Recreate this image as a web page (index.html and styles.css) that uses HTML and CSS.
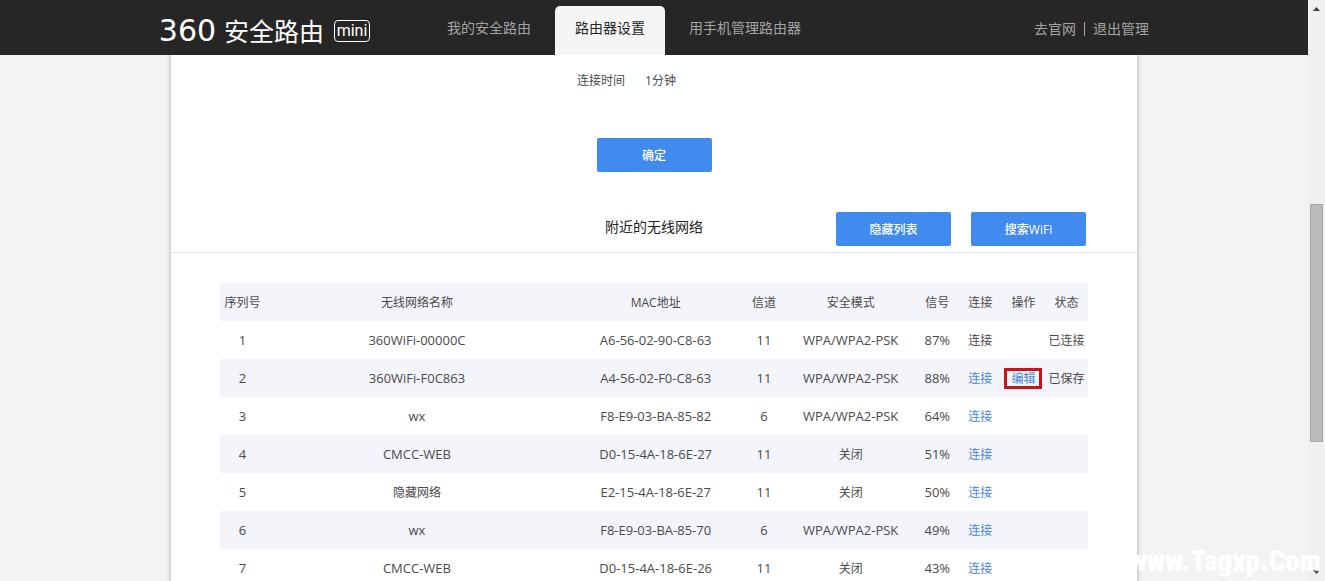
FILE: index.html
```
<!DOCTYPE html>
<html lang="zh-CN">
<head>
	<meta charset="utf-8">
	<title>360安全路由</title>
	<link rel="stylesheet" href="styles.css">
</head>
<body>

<div class="page">
	<header class="header">
		<div class="header-inner">
			<a class="logo" href="#"><span class="logo-num">360</span><span class="logo-name">安全路由</span><span class="logo-mini">mini</span></a>
			<nav class="nav">
				<a href="#">我的安全路由</a>
				<a href="#" class="active">路由器设置</a>
				<a href="#">用手机管理路由器</a>
			</nav>
			<div class="user-links">
				<a href="#">去官网</a>
				<a href="#">退出管理</a>
			</div>
		</div>
	</header>

	<main class="content">
		<div class="info-row">
			<span class="info-label">连接时间</span>
			<span>1分钟</span>
		</div>
		<div class="submit-row">
			<button class="button" type="button">确定</button>
		</div>

		<div class="section-head">
			<h2>附近的无线网络</h2>
			<div class="section-buttons">
				<button class="button" type="button">隐藏列表</button>
				<button class="button" type="button">搜索WiFi</button>
			</div>
		</div>

		<table class="wifi-table">
			<colgroup>
				<col class="col-no">
				<col class="col-name">
				<col class="col-mac">
				<col class="col-s">
				<col class="col-mode">
				<col class="col-s">
				<col class="col-s">
				<col class="col-s">
				<col class="col-s">
			</colgroup>
			<thead>
				<tr><th>序列号</th><th>无线网络名称</th><th>MAC地址</th><th>信道</th><th>安全模式</th><th>信号</th><th>连接</th><th>操作</th><th>状态</th></tr>
			</thead>
			<tbody>
				<tr><td class="en">1</td><td class="en">360WiFi-00000C</td><td class="en">A6-56-02-90-C8-63</td><td class="en">11</td><td class="en">WPA/WPA2-PSK</td><td class="en">87%</td><td>连接</td><td></td><td>已连接</td></tr>
				<tr><td class="en">2</td><td class="en">360WiFi-F0C863</td><td class="en">A4-56-02-F0-C8-63</td><td class="en">11</td><td class="en">WPA/WPA2-PSK</td><td class="en">88%</td><td><a href="#">连接</a></td><td><a href="#" class="marked">编辑</a></td><td>已保存</td></tr>
				<tr><td class="en">3</td><td class="en">wx</td><td class="en">F8-E9-03-BA-85-82</td><td class="en">6</td><td class="en">WPA/WPA2-PSK</td><td class="en">64%</td><td><a href="#">连接</a></td><td></td><td></td></tr>
				<tr><td class="en">4</td><td class="en">CMCC-WEB</td><td class="en">D0-15-4A-18-6E-27</td><td class="en">11</td><td>关闭</td><td class="en">51%</td><td><a href="#">连接</a></td><td></td><td></td></tr>
				<tr><td class="en">5</td><td>隐藏网络</td><td class="en">E2-15-4A-18-6E-27</td><td class="en">11</td><td>关闭</td><td class="en">50%</td><td><a href="#">连接</a></td><td></td><td></td></tr>
				<tr><td class="en">6</td><td class="en">wx</td><td class="en">F8-E9-03-BA-85-70</td><td class="en">6</td><td class="en">WPA/WPA2-PSK</td><td class="en">49%</td><td><a href="#">连接</a></td><td></td><td></td></tr>
				<tr><td class="en">7</td><td class="en">CMCC-WEB</td><td class="en">D0-15-4A-18-6E-26</td><td class="en">11</td><td>关闭</td><td class="en">43%</td><td><a href="#">连接</a></td><td></td><td></td></tr>
			</tbody>
		</table>
	</main>
</div>

<div class="scrollbar">
	<svg width="7" height="4" viewBox="0 0 7 4"><path d="M0 4 L3.5 0 L7 4 Z" fill="#404040"/></svg>
	<div class="track"><div class="thumb"></div></div>
	<svg width="7" height="4" viewBox="0 0 7 4"><path d="M0 0 L3.5 4 L7 0 Z" fill="#404040"/></svg>
</div>

<div class="watermark">www.Tagxp.Com</div>

</body>
</html>
```
FILE: styles.css
```
* {
	box-sizing: border-box;
}

body {
	margin: 0;
	height: 100vh;
	display: flex;
	overflow: hidden;
	background-color: #f2f3f5;
	color: #4a4a4a;
	font-family: "Open Sans", "Noto Sans CJK SC", sans-serif;
	font-size: 12px;
	line-height: 18px;
}

a {
	color: #4a86d8;
	text-decoration: none;
}

.page {
	flex: 1;
	display: flex;
	flex-direction: column;
	overflow: hidden;
}

/* top bar */
.header {
	position: relative;
	z-index: 1;
	flex: none;
	height: 55px;
	background-color: #262626;
}

.header-inner {
	display: flex;
	max-width: 1006px;
	height: 100%;
	margin: 0 auto;
	padding-right: 8px;
}

.logo {
	display: flex;
	align-items: center;
	width: 219px;
	margin-right: 57px;
	padding-top: 7px;
	color: #fff;
	white-space: nowrap;
}

.logo-num {
	width: 73px;
	font-family: "DejaVu Sans", sans-serif;
	font-size: 30px;
	font-weight: 400;
	text-align: center;
}

.logo-name {
	font-size: 25px;
}

.logo-mini {
	width: 36px;
	height: 22px;
	margin-left: auto;
	border: 1px solid #fff;
	border-radius: 4px;
	font-family: Roboto, sans-serif;
	font-size: 16px;
	line-height: 20px;
	text-align: center;
}

.nav {
	display: flex;
	gap: 4px;
	padding-top: 6px;
}

.nav a {
	padding: 0 20px;
	color: #a3a3a3;
	font-size: 14px;
	line-height: 44px;
	border-radius: 5px 5px 0 0;
}

.nav .active {
	background-color: #f5f5f5;
	color: #262626;
}

.user-links {
	display: flex;
	align-items: center;
	margin-left: auto;
	padding-top: 3px;
	font-size: 14px;
	line-height: 14px;
}

.user-links a {
	color: #a3a3a3;
}

.user-links a + a {
	margin-left: 8px;
	padding-left: 8px;
	border-left: 1px solid #a3a3a3;
}

/* content */
.content {
	flex: 1 0 auto;
	width: 100%;
	max-width: 966px;
	margin: 0 auto;
	padding-top: 17px;
	background-color: #fff;
	box-shadow: 0 0 4px 1px #bbb;
}

.info-row {
	display: flex;
	gap: 20px;
}

.info-label {
	width: 47%;
	text-align: right;
}

.submit-row {
	padding: 48px 0 40px;
	text-align: center;
}

.button {
	display: block;
	width: 115px;
	height: 34px;
	padding: 0;
	border: 0;
	border-radius: 2px;
	background-color: #418bee;
	color: #fff;
	font-family: inherit;
	font-size: 12px;
	font-weight: 500;
	cursor: pointer;
}

.button:hover {
	background-color: #5a9cf5;
}

.submit-row .button {
	margin: 0 auto;
}

.section-head {
	display: grid;
	grid-template-columns: 1fr auto 1fr;
	padding: 0 51px 6px;
	border-bottom: 1px solid #dfe4e6;
}

.section-head h2 {
	grid-column: 2;
	margin: 0;
	color: #222;
	font-size: 14px;
	font-weight: 400;
	line-height: 30px;
}

.section-buttons {
	display: flex;
	justify-content: flex-end;
	gap: 20px;
}

.wifi-table {
	width: calc(100% - 98px);
	margin: 30px auto 0;
	border-collapse: collapse;
	table-layout: fixed;
	text-align: center;
}

.col-no { width: 45px; }
.col-s { width: 43px; }
.col-name { width: 35%; }
.col-mac { width: 20%; }
.col-mode { width: 15%; }

.wifi-table th,
.wifi-table td {
	height: 38px;
	padding: 2px 0 0;
	font-weight: 400;
	white-space: nowrap;
}

.wifi-table thead tr,
.wifi-table tbody tr:nth-child(even) {
	background-color: #f4f5fa;
}

.wifi-table .en {
	padding: 0;
	font-size: 13px;
}

.marked {
	display: inline-block;
	padding: 0 4px;
	line-height: 15px;
	outline: 3px solid #c8141c;
}

/* scrollbar */
.scrollbar {
	flex: none;
	display: flex;
	flex-direction: column;
	align-items: center;
	width: 17px;
	padding: 7px 0;
	background-color: #f0f0f0;
}

.track {
	flex: 1;
	width: 13px;
	padding-top: 193px;
}

.thumb {
	height: 65%;
	border: 1px solid #a8a8a8;
	background-color: #bbb;
}

.watermark {
	position: absolute;
	right: 4px;
	bottom: 2px;
	color: #fff;
	font-family: Impact, "Roboto Condensed", Roboto, sans-serif;
	font-size: 29px;
	font-weight: 900;
	line-height: 36px;
}
```
